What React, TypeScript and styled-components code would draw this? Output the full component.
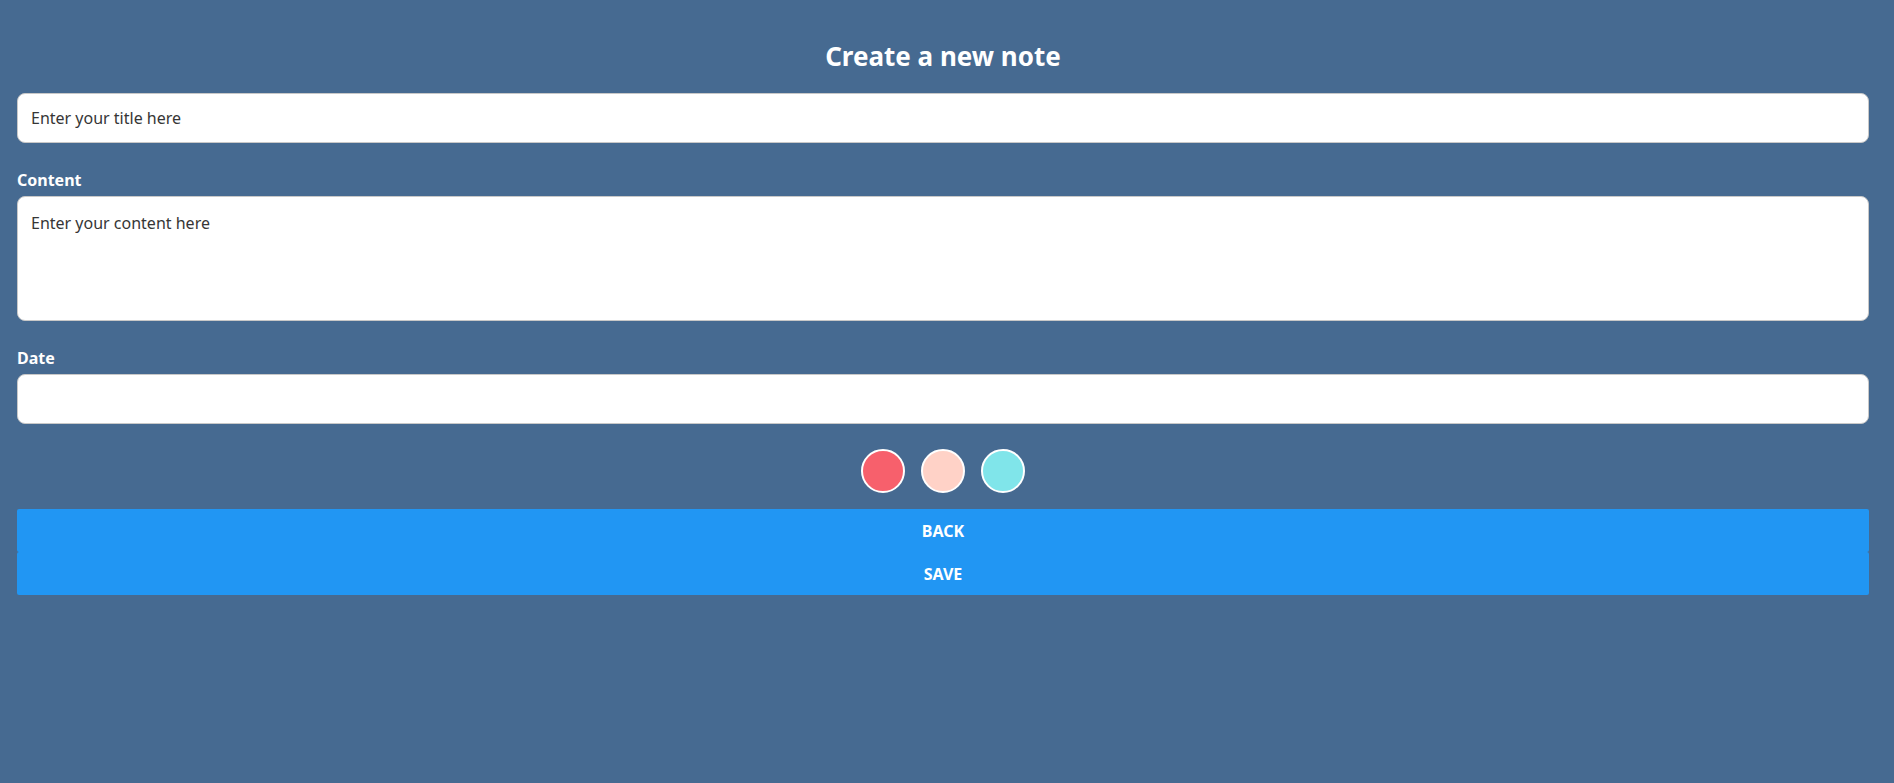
import React from "react";
import styled, { createGlobalStyle } from "styled-components";

const GlobalStyle = createGlobalStyle`
  html, body {
    margin: 0;
    padding: 0;
    background: #466a91;
    font-family: "Noto Sans", "Open Sans", sans-serif;
  }
  * { box-sizing: border-box; }
`;

const Page = styled.div`
  min-height: 783px;
  background: #466a91;
  padding: 39px 25px 0 17px;
`;

const Heading = styled.h2`
  margin: 0 0 20px;
  font-size: 26px;
  line-height: 34px;
  font-weight: 700;
  color: #ffffff;
  text-align: center;
`;

const Form = styled.form`
  display: flex;
  flex-direction: column;
`;

const Label = styled.label`
  display: block;
  margin: 24px 0 3px;
  font-size: 16px;
  line-height: 26px;
  font-weight: 700;
  color: #ffffff;
`;

const fieldBase = `
  display: block;
  width: 100%;
  border: 1px solid #c8c8c8;
  border-radius: 8px;
  background: #ffffff;
  color: #333333;
  font-family: "Noto Sans", "Open Sans", sans-serif;
  font-size: 16px;
  outline: none;
  &::placeholder { color: #363636; opacity: 1; }
`;

const TextInput = styled.input`
  ${fieldBase}
  height: 50px;
  padding: 0 13px;
`;

const TextArea = styled.textarea<{ $height: number }>`
  ${fieldBase}
  height: ${(p) => p.$height}px;
  padding: 15px 13px;
  resize: none;
  line-height: 22px;
`;

const Swatches = styled.div`
  display: flex;
  justify-content: center;
  gap: 16px;
  margin: 25px 0 16px;
`;

const Swatch = styled.button<{ $color: string }>`
  width: 44px;
  height: 44px;
  border-radius: 50%;
  border: 2px solid #ffffff;
  background: ${(p) => p.$color};
  padding: 0;
  cursor: pointer;
`;

const ActionButton = styled.button`
  display: block;
  width: 100%;
  height: 43px;
  border: none;
  border-radius: 2px;
  background: #2196f3;
  color: #ffffff;
  font-family: "Noto Sans", "Open Sans", sans-serif;
  font-size: 16px;
  font-weight: 700;
  text-transform: uppercase;
  cursor: pointer;
`;

const colors = ["#f7606c", "#ffd2c7", "#80e5ea"];

export default function App() {
  return (
    <>
      <GlobalStyle />
      <Page>
        <Heading>Create a new note</Heading>
        <Form onSubmit={(e) => e.preventDefault()}>
          <TextInput placeholder="Enter your title here" />
          <Label>Content</Label>
          <TextArea $height={125} placeholder="Enter your content here" />
          <Label>Date</Label>
          <TextInput />
          <Swatches>
            {colors.map((c) => (
              <Swatch key={c} type="button" $color={c} />
            ))}
          </Swatches>
          <ActionButton type="button">Back</ActionButton>
          <ActionButton type="submit">Save</ActionButton>
        </Form>
      </Page>
    </>
  );
}
